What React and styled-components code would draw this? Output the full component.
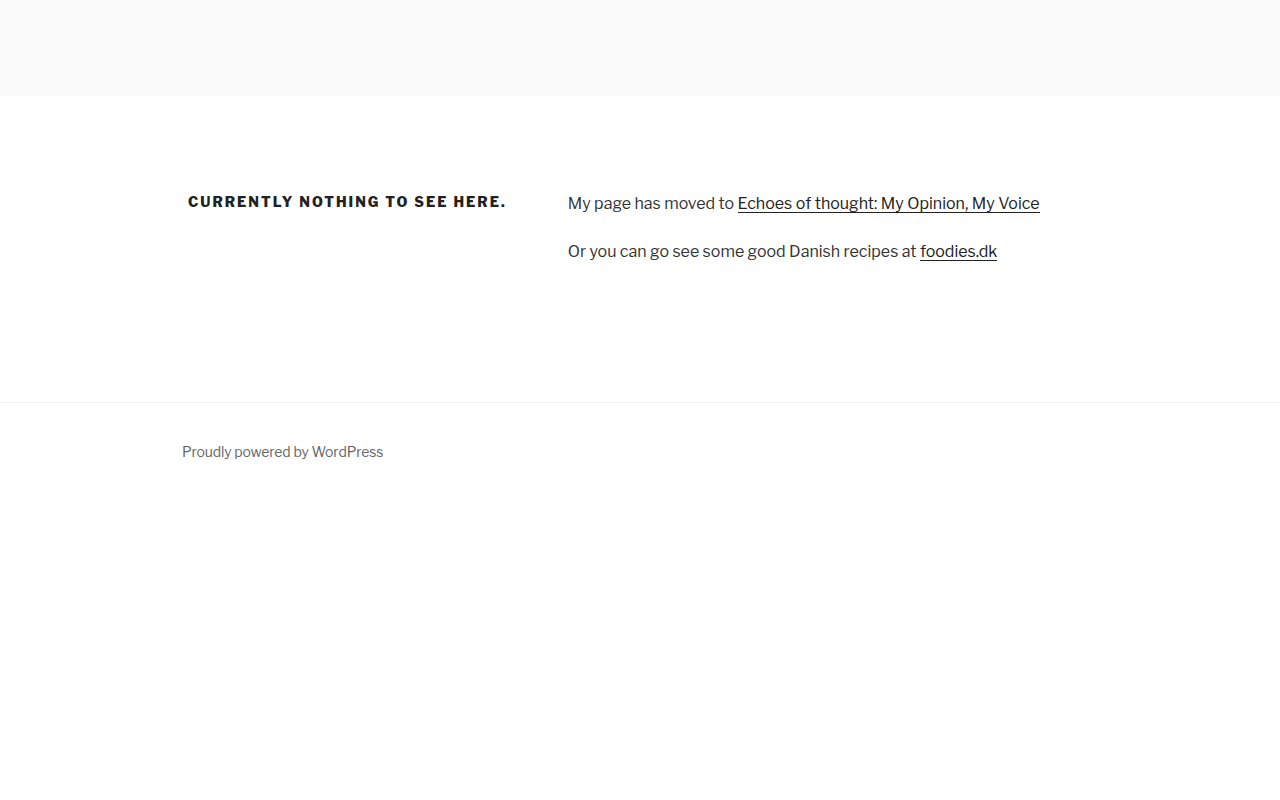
import React from "react";
import styled, { createGlobalStyle } from "styled-components";

const GlobalStyle = createGlobalStyle`
  html, body {
    margin: 0;
    padding: 0;
    background: #fff;
  }
  body {
    font-family: "Libre Franklin", Inter, "Liberation Sans", sans-serif;
    color: #333;
    font-size: 16px;
    line-height: 1.5;
  }
`;

const Header = styled.header`
  background: #fafafa;
  height: 96px;
`;

const Wrap = styled.div`
  max-width: 1000px;
  margin: 0 auto;
  padding: 0 ${({ side }) => side || 48}px;
  box-sizing: border-box;
`;

const Content = styled.main`
  padding: 96px 0 138px;
`;

const Article = styled.article`
  display: flex;
  justify-content: space-between;
`;

const EntryHeader = styled.div`
  width: 36%;
`;

const Title = styled.h2`
  margin: 0;
  font-size: 14px;
  font-weight: 800;
  letter-spacing: 0.145em;
  text-transform: uppercase;
  color: #222;
  line-height: 19px;
`;

const EntryContent = styled.div`
  width: 58%;
`;

const Para = styled.p`
  margin: 0 0 24px;
  &:last-child {
    margin-bottom: 0;
  }
`;

const A = styled.a`
  color: #222;
  text-decoration: none;
  box-shadow: inset 0 -1px 0 #222;
`;

const Footer = styled.footer`
  border-top: 1px solid #eee;
  padding: 38px 0 40px;
`;

const SiteInfo = styled.div`
  font-size: 14px;
  line-height: 1.5;
  letter-spacing: -0.01em;
  color: #666;
`;

export default function App() {
  return (
    <>
      <GlobalStyle />
      <Header />
      <Content>
        <Wrap>
          <Article>
            <EntryHeader>
              <Title>Currently nothing to see here.</Title>
            </EntryHeader>
            <EntryContent>
              <Para>
                My page has moved to <A href="#">Echoes of thought: My Opinion, My Voice</A>
              </Para>
              <Para>
                Or you can go see some good Danish recipes at <A href="#">foodies.dk</A>
              </Para>
            </EntryContent>
          </Article>
        </Wrap>
      </Content>
      <Footer>
        <Wrap side={42}>
          <SiteInfo>Proudly powered by WordPress</SiteInfo>
        </Wrap>
      </Footer>
    </>
  );
}
